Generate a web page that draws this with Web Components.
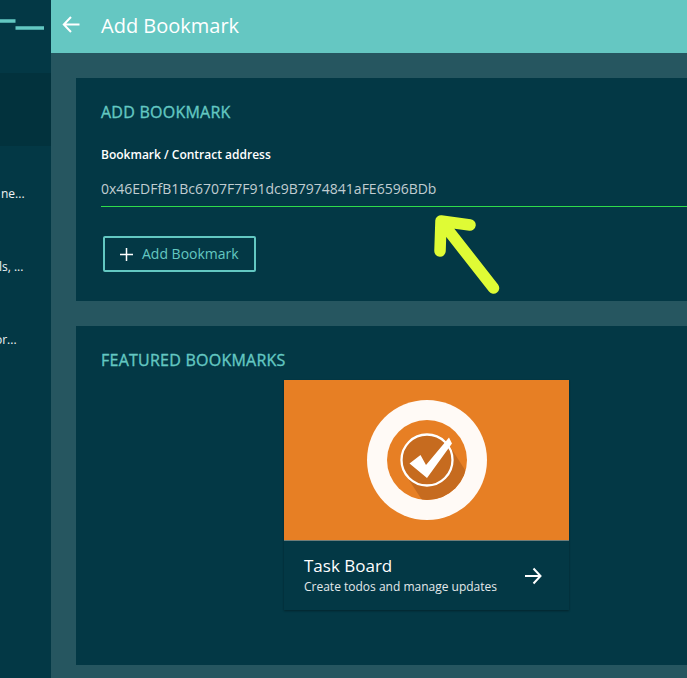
<!DOCTYPE html>
<html lang="en"><head><meta charset="utf-8"><title>Add Bookmark</title>
<style>
html,body{margin:0;height:100%;overflow:hidden}
body{font-family:"Open Sans","Noto Sans",sans-serif;background:#265660;color:#fff}
</style></head><body>
<bookmark-app></bookmark-app>
<script>
function define(name, html){
  const t=document.createElement('template');t.innerHTML=html;
  customElements.define(name,class extends HTMLElement{
    constructor(){super();this.attachShadow({mode:'open'}).append(t.content.cloneNode(true));}
  });
}
define('side-item',`<style>:host{display:flex;align-items:center;height:73px;box-sizing:border-box;font-size:12px;line-height:18px;white-space:nowrap;color:#f0f4f5;padding-top:22px}
:host([active]){background:#02323d}::slotted(*){display:block}</style><slot></slot>`);
define('side-nav',`<style>:host{display:block;background:#033845;overflow:hidden}
.logo{height:73px}svg{display:block}.a{margin-left:1px}.b{margin-left:-1px}.c{margin-left:-5px}</style>
<div class="logo"><svg width="51" height="73"><path d="M0 21H15.5M15.500 28H44" stroke="#63c8c2" stroke-width="3.600"/></svg></div>
<side-item active></side-item>
<side-item><span class="a">ne...</span></side-item>
<side-item><span class="b">ls, ...</span></side-item>
<side-item><span class="c">or...</span></side-item>`);
define('app-header',`<style>:host{display:flex;align-items:center;height:53px;background:#65c7c2;padding-left:11px;font-size:20px;line-height:28px;box-sizing:border-box}
svg{margin:0 21px 3px 0;flex:none}span{padding-bottom:1px}</style>
<svg width="18" height="18" viewBox="0 0 18 18" fill="none" stroke="#fff" stroke-width="2"><path d="M9 1L1.800 8.500L9 16M2 8.500H17.500"/></svg><span><slot></slot></span>`);
define('content-panel',`<style>:host{display:block;background:#033845;padding:22px 0 0 25px;box-sizing:border-box}
h2{margin:0;font-size:16px;line-height:24px;font-weight:400;letter-spacing:.24px;-webkit-text-stroke:.35px #63c8c2;color:#63c8c2}</style><h2><slot name="title"></slot></h2><slot></slot>`);
define('address-field',`<style>:host{display:block;margin-top:22px}label{display:block;font-size:12px;line-height:18px;font-weight:600}
.v{font-size:14px;line-height:20px;color:#c0cdd1;padding:15px 0 7px;border-bottom:1px solid #2fdc4b}</style>
<label><slot name="label"></slot></label><div class="v"><slot></slot></div>`);
define('outline-button',`<style>:host{display:flex;align-items:center;box-sizing:border-box;width:153px;height:36px;margin:29px 0 0 2px;border:2px solid #63c8c2;border-radius:2px;padding-left:15px;color:#63c8c2;font-size:14px;line-height:20px}
svg{margin-right:9px}</style><svg width="13" height="13"><path d="M6.500 0V13M0 6.500H13" stroke="#fff" stroke-width="1.500"/></svg><slot></slot>`);
define('bookmark-card',`<style>:host{display:block;width:285px;height:230px;box-shadow:0 1px 2px rgba(0,0,0,.35)}
.art{height:160px;background:#e77f24;border-bottom:1px solid #6f7d7a;display:grid;place-items:center}
.body{display:flex;align-items:center;justify-content:space-between;height:69px;padding:0 27px 0 20px;box-sizing:border-box}
.text{padding-bottom:2px}.t{font-size:17px;line-height:24px}.s{font-size:12px;line-height:18px;color:#e3e9eb}</style>
<div class="art"><svg width="120" height="120" viewBox="0 0 120 120"><circle cx="60" cy="60" r="60" fill="#fffaf6"/><circle cx="60" cy="60" r="40" fill="#e77f24"/>
<clipPath id="inner"><circle cx="60" cy="60" r="40"/></clipPath><path clip-path="url(#inner)" d="M42 80L55 100H102V76L84 48L78 42Z" fill="#c66b1f"/>
<circle cx="60" cy="60" r="25.500" fill="#c66b1f" stroke="#fff" stroke-width="2.300"/><path d="M42.500 63.500L53.500 55L59 65L82 37.500L85 43.500L60 78Z" fill="#fff"/></svg></div>
<div class="body"><div class="text"><div class="t"><slot name="name"></slot></div><div class="s"><slot></slot></div></div>
<svg width="17" height="18" fill="none" stroke="#fff" stroke-width="2"><path d="M8.500 1.500L15.500 9L8.500 16.500M0 9H15.500"/></svg></div>`);
define('pointer-arrow',`<style>:host{display:block;position:absolute;left:433px;top:213px}svg{display:block}</style>
<svg width="67" height="82" fill="none" stroke="#dffb35" stroke-width="11.500" stroke-linecap="round" stroke-linejoin="round"><path d="M60.500 75L8 8L37 12M8 8L7 38"/></svg>`);
define('bookmark-app',`<style>:host{display:grid;grid-template-columns:51px 1fr;height:678px;overflow:hidden;position:relative}
main{padding:25px 0 0 25px;display:flex;flex-direction:column;gap:25px}
.one{height:223px}.two{height:339px}bookmark-card{margin:8px 0 0 183px}</style>
<side-nav></side-nav><div><app-header>Add Bookmark</app-header><main>
<content-panel class="one"><span slot="title">ADD BOOKMARK</span><address-field><span slot="label">Bookmark / Contract address</span>0x46EDFfB1Bc6707F7F91dc9B7974841aFE6596BDb</address-field><outline-button>Add Bookmark</outline-button></content-panel>
<content-panel class="two"><span slot="title">FEATURED BOOKMARKS</span><bookmark-card><span slot="name">Task Board</span>Create todos and manage updates</bookmark-card></content-panel>
</main></div><pointer-arrow></pointer-arrow>`);
</script></body></html>
